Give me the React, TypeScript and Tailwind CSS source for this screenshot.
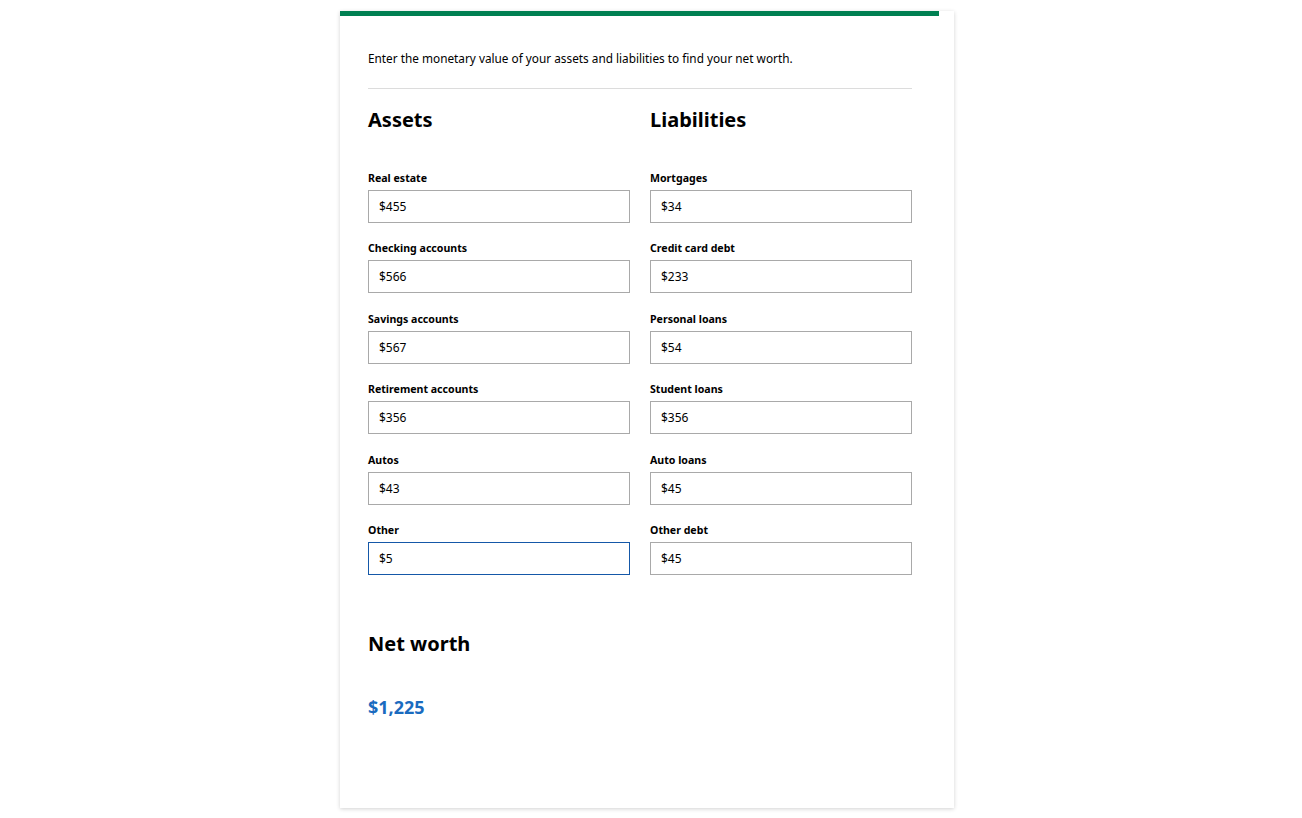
import { useState } from "react";

const assets = [
  { label: "Real estate", value: "$455" },
  { label: "Checking accounts", value: "$566" },
  { label: "Savings accounts", value: "$567" },
  { label: "Retirement accounts", value: "$356" },
  { label: "Autos", value: "$43" },
  { label: "Other", value: "$5", focused: true },
];

const liabilities = [
  { label: "Mortgages", value: "$34" },
  { label: "Credit card debt", value: "$233" },
  { label: "Personal loans", value: "$54" },
  { label: "Student loans", value: "$356" },
  { label: "Auto loans", value: "$45" },
  { label: "Other debt", value: "$45" },
];

function Field({ label, value, focused }: { label: string; value: string; focused?: boolean }) {
  const [v, setV] = useState(value);
  return (
    <div className="flex flex-col">
      <label className="mb-[3px] h-[17px] text-[10.6px] font-bold leading-[17px] text-black">{label}</label>
      <input
        className={`h-[33px] w-full border bg-white px-[10px] text-[12px] text-black outline-none ${
          focused ? "border-[#1558a8]" : "border-[#a9a9a9]"
        }`}
        value={v}
        onChange={(e) => setV(e.target.value)}
      />
    </div>
  );
}

function Column({ title, items }: { title: string; items: { label: string; value: string; focused?: boolean }[] }) {
  return (
    <div className="flex flex-col">
      <h2 className="h-[28px] text-[20px] font-bold leading-[28px] text-black">{title}</h2>
      <div className="mt-[36px] flex flex-col gap-[17.4px]">
        {items.map((it) => (
          <Field key={it.label} {...it} />
        ))}
      </div>
    </div>
  );
}

export default function App() {
  return (
    <div className="min-h-screen bg-white pt-[11px]" style={{ fontFamily: '"Noto Sans", "Open Sans", sans-serif' }}>
      <div className="ml-[340px] h-[797px] w-[614px] bg-white shadow-[0_1px_4px_rgba(0,0,0,0.18)]">
        <div className="h-[5px] w-[599px] bg-[#008052]" />
        <div className="pl-[28px] pr-[42px]">
          <p className="mt-[34px] text-[11.8px] leading-[16px] text-black">
            Enter the monetary value of your assets and liabilities to find your net worth.
          </p>
          <div className="mt-[22px] h-px bg-[#dcdcdc]" />
          <div className="mt-[17px] grid grid-cols-2 gap-[20px]">
            <Column title="Assets" items={assets} />
            <Column title="Liabilities" items={liabilities} />
          </div>
          <h2 className="mt-[55px] h-[28px] text-[20px] font-bold leading-[28px] text-black">Net worth</h2>
          <p className="mt-[37px] text-[18px] font-bold leading-[24px] text-[#1a6bbf]">$1,225</p>
        </div>
      </div>
    </div>
  );
}
